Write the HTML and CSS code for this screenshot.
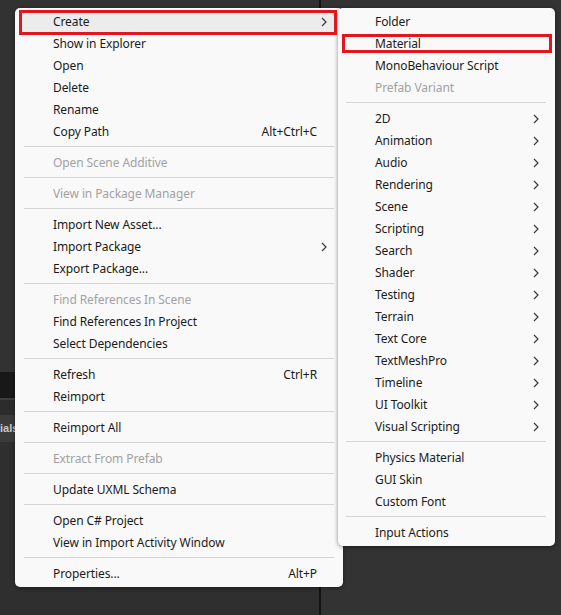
FILE: index.html
```html
<!DOCTYPE html>
<html>
<head>
<meta charset="utf-8">
<link rel="stylesheet" href="styles.css">
</head>
<body>
<div class="desk">
  <div class="left-panel">
    <div class="lp-top"></div>
    <div class="lp-toolbar"></div>
    <div class="lp-line"></div>
    <div class="lp-gap"></div>
    <div class="lp-tab"><span class="lp-label">ials</span></div>
    <div class="lp-rest"></div>
  </div>
  <div class="divider"></div>
  <div class="right-panel"></div>
</div>

<div class="menu main-menu">
  <div class="item hl"><span class="label">Create</span><svg class="arrow" width="6" height="10" viewBox="0 0 6 10"><path d="M1 1 L5 5 L1 9" /></svg></div>
  <div class="item"><span class="label">Show in Explorer</span></div>
  <div class="item"><span class="label">Open</span></div>
  <div class="item"><span class="label">Delete</span></div>
  <div class="item"><span class="label">Rename</span></div>
  <div class="item"><span class="label">Copy Path</span><span class="shortcut">Alt+Ctrl+C</span></div>
  <div class="sep"></div>
  <div class="item dis"><span class="label">Open Scene Additive</span></div>
  <div class="sep"></div>
  <div class="item dis"><span class="label">View in Package Manager</span></div>
  <div class="sep"></div>
  <div class="item"><span class="label">Import New Asset...</span></div>
  <div class="item"><span class="label">Import Package</span><svg class="arrow" width="6" height="10" viewBox="0 0 6 10"><path d="M1 1 L5 5 L1 9" /></svg></div>
  <div class="item"><span class="label">Export Package...</span></div>
  <div class="sep"></div>
  <div class="item dis"><span class="label">Find References In Scene</span></div>
  <div class="item"><span class="label">Find References In Project</span></div>
  <div class="item"><span class="label">Select Dependencies</span></div>
  <div class="sep"></div>
  <div class="item"><span class="label">Refresh</span><span class="shortcut">Ctrl+R</span></div>
  <div class="item"><span class="label">Reimport</span></div>
  <div class="sep"></div>
  <div class="item"><span class="label">Reimport All</span></div>
  <div class="sep"></div>
  <div class="item dis"><span class="label">Extract From Prefab</span></div>
  <div class="sep"></div>
  <div class="item"><span class="label">Update UXML Schema</span></div>
  <div class="sep"></div>
  <div class="item"><span class="label">Open C# Project</span></div>
  <div class="item"><span class="label">View in Import Activity Window</span></div>
  <div class="sep"></div>
  <div class="item"><span class="label">Properties...</span><span class="shortcut">Alt+P</span></div>
</div>

<div class="menu sub-menu">
  <div class="item"><span class="label">Folder</span></div>
  <div class="item"><span class="label">Material</span></div>
  <div class="item"><span class="label">MonoBehaviour Script</span></div>
  <div class="item dis"><span class="label">Prefab Variant</span></div>
  <div class="sep"></div>
  <div class="item"><span class="label">2D</span><svg class="arrow" width="6" height="10" viewBox="0 0 6 10"><path d="M1 1 L5 5 L1 9" /></svg></div>
  <div class="item"><span class="label">Animation</span><svg class="arrow" width="6" height="10" viewBox="0 0 6 10"><path d="M1 1 L5 5 L1 9" /></svg></div>
  <div class="item"><span class="label">Audio</span><svg class="arrow" width="6" height="10" viewBox="0 0 6 10"><path d="M1 1 L5 5 L1 9" /></svg></div>
  <div class="item"><span class="label">Rendering</span><svg class="arrow" width="6" height="10" viewBox="0 0 6 10"><path d="M1 1 L5 5 L1 9" /></svg></div>
  <div class="item"><span class="label">Scene</span><svg class="arrow" width="6" height="10" viewBox="0 0 6 10"><path d="M1 1 L5 5 L1 9" /></svg></div>
  <div class="item"><span class="label">Scripting</span><svg class="arrow" width="6" height="10" viewBox="0 0 6 10"><path d="M1 1 L5 5 L1 9" /></svg></div>
  <div class="item"><span class="label">Search</span><svg class="arrow" width="6" height="10" viewBox="0 0 6 10"><path d="M1 1 L5 5 L1 9" /></svg></div>
  <div class="item"><span class="label">Shader</span><svg class="arrow" width="6" height="10" viewBox="0 0 6 10"><path d="M1 1 L5 5 L1 9" /></svg></div>
  <div class="item"><span class="label">Testing</span><svg class="arrow" width="6" height="10" viewBox="0 0 6 10"><path d="M1 1 L5 5 L1 9" /></svg></div>
  <div class="item"><span class="label">Terrain</span><svg class="arrow" width="6" height="10" viewBox="0 0 6 10"><path d="M1 1 L5 5 L1 9" /></svg></div>
  <div class="item"><span class="label">Text Core</span><svg class="arrow" width="6" height="10" viewBox="0 0 6 10"><path d="M1 1 L5 5 L1 9" /></svg></div>
  <div class="item"><span class="label">TextMeshPro</span><svg class="arrow" width="6" height="10" viewBox="0 0 6 10"><path d="M1 1 L5 5 L1 9" /></svg></div>
  <div class="item"><span class="label">Timeline</span><svg class="arrow" width="6" height="10" viewBox="0 0 6 10"><path d="M1 1 L5 5 L1 9" /></svg></div>
  <div class="item"><span class="label">UI Toolkit</span><svg class="arrow" width="6" height="10" viewBox="0 0 6 10"><path d="M1 1 L5 5 L1 9" /></svg></div>
  <div class="item"><span class="label">Visual Scripting</span><svg class="arrow" width="6" height="10" viewBox="0 0 6 10"><path d="M1 1 L5 5 L1 9" /></svg></div>
  <div class="sep"></div>
  <div class="item"><span class="label">Physics Material</span></div>
  <div class="item"><span class="label">GUI Skin</span></div>
  <div class="item"><span class="label">Custom Font</span></div>
  <div class="sep"></div>
  <div class="item"><span class="label">Input Actions</span></div>
</div>

<div class="mark mark-create"></div>
<div class="mark mark-material"></div>
</body>
</html>
```

FILE: styles.css
```css
* { box-sizing: border-box; }
html, body {
  margin: 0;
  padding: 0;
}
body {
  width: 561px;
  height: 615px;
  overflow: hidden;
  background: #333333;
  font-family: "Noto Sans", "Liberation Sans", sans-serif;
  font-size: 12px;
  position: relative;
}
.desk {
  display: flex;
  height: 615px;
}
.left-panel {
  width: 319px;
  display: flex;
  flex-direction: column;
}
.lp-top { height: 372px; background: #323232; }
.lp-toolbar { height: 26px; background: #181818; }
.lp-line { height: 2px; background: #3e3e3e; }
.lp-gap { height: 15px; background: #2c2c2c; }
.lp-tab {
  height: 27px;
  background: #3b3b3b;
  color: #c8c8c8;
  font-family: "Liberation Sans", sans-serif;
  font-weight: bold;
  font-size: 11px;
  line-height: 27px;
  white-space: nowrap;
  overflow: hidden;
  padding-left: 0;
}
.lp-rest { flex: 1; background: #2f2f2f; }
.divider { width: 2px; background: #141414; }
.right-panel { flex: 1; background: #333333; }

.menu {
  position: absolute;
  top: 8px;
  background: #f9f9f9;
  border-radius: 5px;
  box-shadow: 0 1px 4px rgba(0,0,0,0.45);
  color: #1b1b1b;
  letter-spacing: -0.1px;
}
.main-menu {
  left: 15px;
  width: 328px;
  padding: 2px 0 3px;
}
.sub-menu {
  left: 338px;
  width: 217px;
  padding: 2px 0 3px;
}
.item {
  height: 22px;
  line-height: 20px;
  padding-top: 2px;
  display: flex;
  align-items: center;
  white-space: nowrap;
  position: relative;
}
.main-menu .item { padding-left: 38px; padding-right: 26px; }
.sub-menu .item { padding-left: 37px; padding-right: 16px; }
.item .label { flex: 1; }
.item.dis { color: #a2a2a2; }
.item.hl { background: #ececec; margin: 0 6px 0 5px; padding-left: 33px; padding-right: 15px; }
.shortcut { color: #1b1b1b; }
.arrow {
  position: absolute;
  top: 7px;
  fill: none;
  stroke: #3a3a3a;
  stroke-width: 1.2;
}
.main-menu .arrow { right: 16px; }
.main-menu .item.hl .arrow { right: 10px; }
.sub-menu .arrow { right: 16px; }
.sep {
  height: 9px;
  padding-top: 4px;
}
.sep::before {
  content: "";
  display: block;
  height: 1px;
  background: #d5d5d5;
}
.main-menu .sep { margin: 0 9px 0 9px; }
.sub-menu .sep { margin: 0 9px 0 8px; }

.mark {
  position: absolute;
  border: 3px solid #e3161f;
}
.mark-create { left: 19px; top: 10px; width: 318px; height: 25px; }
.mark-material { left: 342px; top: 34px; width: 210px; height: 19px; }
```
